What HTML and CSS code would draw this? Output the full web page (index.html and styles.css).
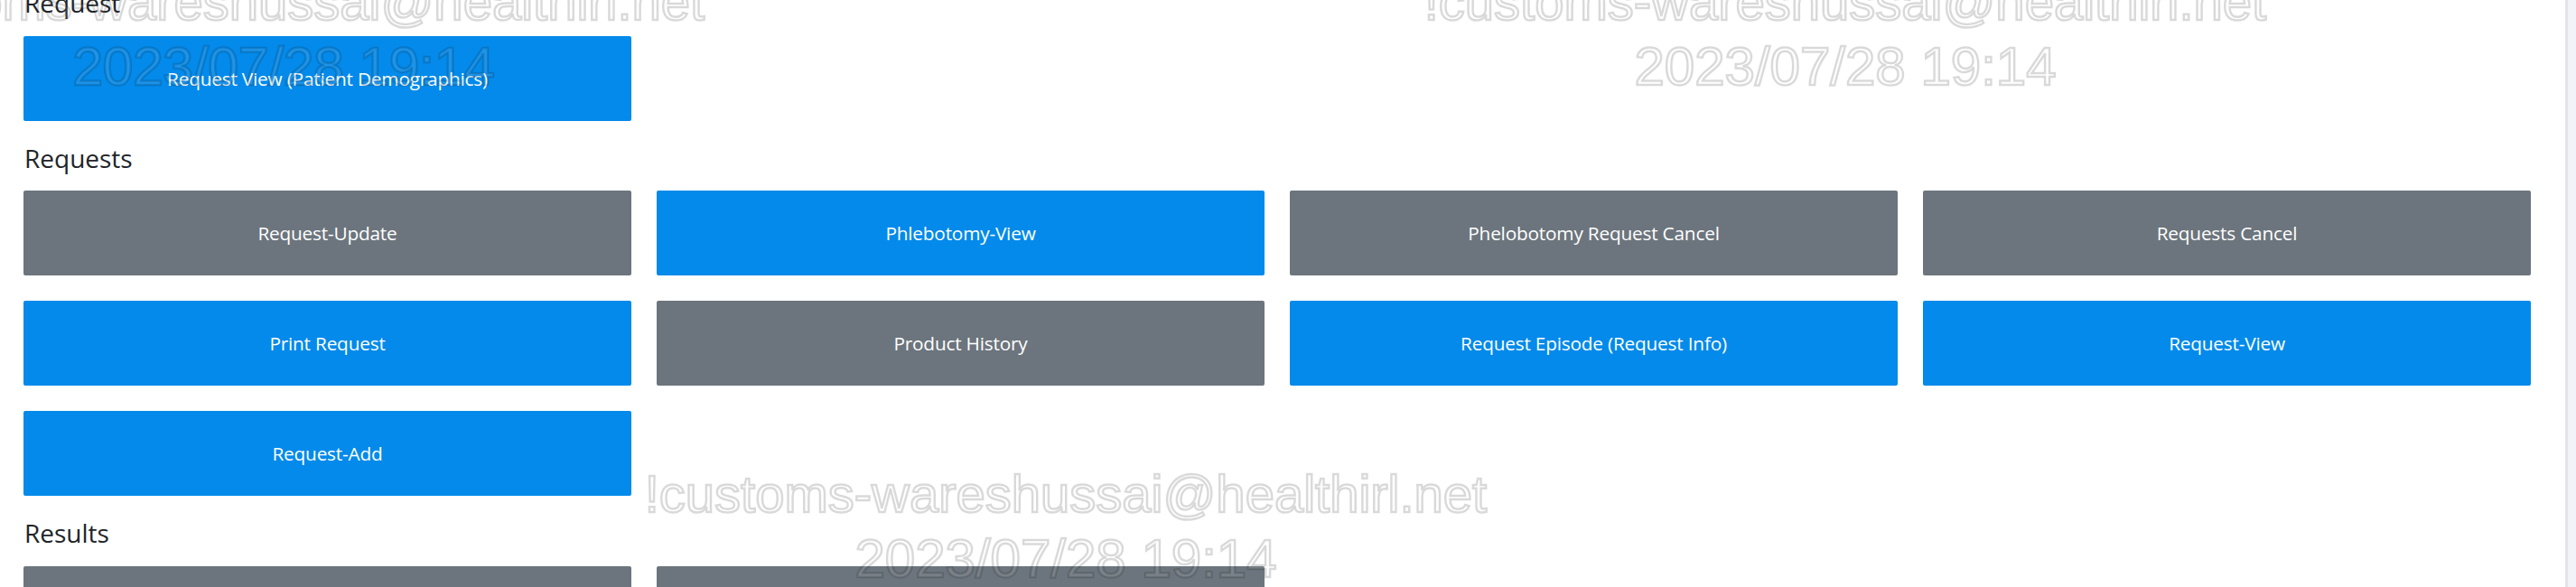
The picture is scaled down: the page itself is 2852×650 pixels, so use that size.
FILE: index.html
```html
<!DOCTYPE html>
<html lang="en">
<head>
<meta charset="utf-8">
<title>Permissions</title>
<link rel="stylesheet" href="styles.css">
</head>
<body>
<div class="shell">
  <main class="content">
    <section class="group">
      <h5 class="group-title">Request</h5>
      <div class="btn-grid">
        <button class="tile tile-primary">Request View (Patient Demographics)</button>
      </div>
    </section>
    <section class="group">
      <h5 class="group-title">Requests</h5>
      <div class="btn-grid">
        <button class="tile tile-secondary">Request-Update</button>
        <button class="tile tile-primary">Phlebotomy-View</button>
        <button class="tile tile-secondary">Phelobotomy Request Cancel</button>
        <button class="tile tile-secondary">Requests Cancel</button>
        <button class="tile tile-primary">Print Request</button>
        <button class="tile tile-secondary">Product History</button>
        <button class="tile tile-primary">Request Episode (Request Info)</button>
        <button class="tile tile-primary">Request-View</button>
        <button class="tile tile-primary">Request-Add</button>
      </div>
    </section>
    <section class="group">
      <h5 class="group-title">Results</h5>
      <div class="btn-grid">
        <button class="tile tile-secondary">Results-View</button>
        <button class="tile tile-secondary">Results-Update</button>
      </div>
    </section>
  </main>
  <div class="scrollbar"></div>
</div>
<div class="watermark wm-a"><span>!customs-wareshussai@healthirl.net</span><span class="wm-date">2023/07/28 19:14</span></div>
<div class="watermark wm-b"><span>!customs-wareshussai@healthirl.net</span><span class="wm-date">2023/07/28 19:14</span></div>
<div class="watermark wm-c"><span>!customs-wareshussai@healthirl.net</span><span class="wm-date">2023/07/28 19:14</span></div>
</body>
</html>
```
FILE: styles.css
```css
html, body {
  margin: 0;
  padding: 0;
  background: #ffffff;
  height: 650px;
  overflow: hidden;
}

body {
  font-family: "Open Sans", "Noto Sans", sans-serif;
  color: #212529;
  position: relative;
}

.shell {
  display: flex;
  height: 650px;
}

.content {
  flex: 1;
  padding: 0 38px 0 26px;
  margin-top: -13px;
}

.group-title {
  font-size: 28px;
  font-weight: 400;
  line-height: 33.6px;
  margin: 25px 0 19px 1px;
}

.group:first-child .group-title {
  margin-top: 0;
}

.btn-grid {
  display: grid;
  grid-template-columns: repeat(4, 1fr);
  gap: 28px;
}

.tile {
  height: 94px;
  border: none;
  border-radius: 2px;
  color: #ffffff;
  font-family: "Open Sans", "Noto Sans", sans-serif;
  font-size: 20.8px;
  letter-spacing: -0.2px;
  padding: 0 10px;
  display: flex;
  align-items: center;
  justify-content: center;
}

.tile-primary {
  background: #038aea;
}

.tile-secondary {
  background: #6c757d;
}

.scrollbar {
  width: 9px;
  flex: 0 0 9px;
  background: #f2f3f8;
  border-left: 3px solid #e4e5ea;
}

.watermark {
  position: absolute;
  width: 1200px;
  display: flex;
  flex-direction: column;
  align-items: center;
  font-family: "Liberation Sans", Arial, sans-serif;
  font-size: 58px;
  line-height: 72px;
  color: rgba(255, 255, 255, 0.1);
  -webkit-text-stroke: 2.5px rgba(0, 0, 0, 0.15);
  white-space: nowrap;
  pointer-events: none;
}

.wm-date {
  font-size: 60px;
}

.wm-a {
  left: -286px;
  top: -34px;
}

.wm-b {
  left: 1443px;
  top: -34px;
}

.wm-c {
  left: 580px;
  top: 511px;
}
```
